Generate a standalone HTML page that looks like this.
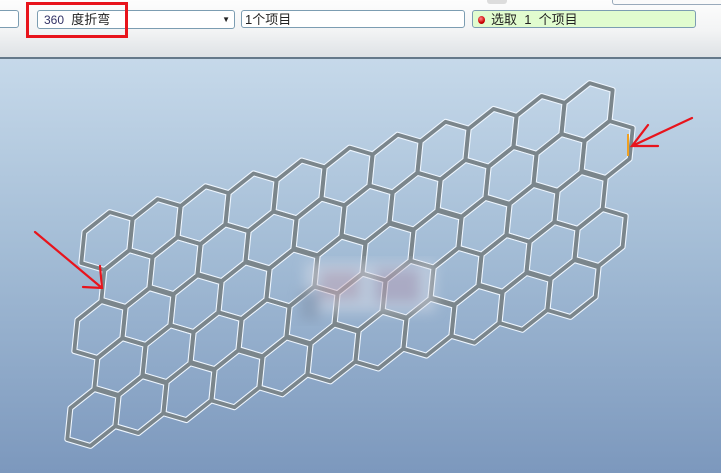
<!DOCTYPE html>
<html><head><meta charset="utf-8"><style>
body{margin:0;width:721px;height:473px;overflow:hidden;position:relative;font-family:"Liberation Sans","Noto Sans CJK SC",sans-serif}
#bar{position:absolute;left:0;top:0;width:721px;height:57px;background:linear-gradient(#fdfdfd 0,#f3f4f5 30px,#dfe3e6 56px);border-bottom:1px solid #b9cad6}
#line{position:absolute;left:0;top:57px;width:721px;height:2px;background:#65798a}
#vp{position:absolute;left:0;top:59px;width:721px;height:414px;background:linear-gradient(#c6d9ea,#a4bdd6 45%,#7c98bd)}
.f{position:absolute;top:10px;height:18px;border:1px solid #7c9db2;border-radius:3px;background:#fff;font-size:13px;line-height:17px;color:#222;box-sizing:border-box;padding-left:4px;white-space:nowrap}
</style></head><body>
<div id="bar"></div>
<div class="f" style="left:-5px;width:24px"></div>
<div class="f" style="left:37px;width:198px;height:19px;padding-left:6px"><span style="color:#336;font-size:12px">360</span>&nbsp; 度折弯<span style="position:absolute;right:4px;top:0;font-size:8px">▼</span></div>
<div class="f" style="left:241px;width:224px;padding-left:3px">1个项目</div>
<div class="f" style="left:472px;width:224px;background:#e1fccf;padding-left:18px">选取 &nbsp;1 &nbsp;个项目<span style="position:absolute;left:5px;top:5px;width:7px;height:8px;border-radius:50%;background:radial-gradient(circle at 40% 35%,#f88,#c00 60%,#800)"></span></div>
<div style="position:absolute;left:26px;top:2px;width:102px;height:36px;border:3px solid #e8141c;box-sizing:border-box"></div>
<div style="position:absolute;left:612px;top:-6px;width:110px;height:9px;border:1px solid #9ab;border-radius:3px;background:#fafafa"></div>
<div style="position:absolute;left:487px;top:-3px;width:20px;height:7px;background:#ddd;border-radius:3px"></div>
<div id="line"></div>
<div id="vp"></div>
<svg id="s" width="721" height="473" style="position:absolute;left:0;top:0">
<defs>
<filter id="bl"><feGaussianBlur stdDeviation="6"/></filter>
</defs>
<g id="hw"></g>
<g id="hg"></g>
<g filter="url(#bl)" opacity="0.5">
<rect x="305" y="262" width="130" height="50" fill="#d8dde8"/>
<rect x="320" y="270" width="40" height="30" fill="#c8a8b8"/>
<rect x="375" y="268" width="45" height="35" fill="#b8a0b8"/>
<rect x="300" y="290" width="20" height="30" fill="#8090a8"/>
</g>
<line x1="628" y1="134" x2="628" y2="156" stroke="#f0a020" stroke-width="2"/>
<g stroke="#e8141c" stroke-width="2.2" fill="none" stroke-linecap="round">
<path d="M35 232 L102 288 M100 266 L102 288 L83 287"/>
<path d="M692 118 L632 146 M648 125 L632 146 L658 146"/>
</g>
</svg>
<script>
var ns="http://www.w3.org/2000/svg";
var V=[[2.5,-27.5],[24.5,-21],[21.5,8.5],[-2.5,27.5],[-24.5,21],[-21.5,-8.5]];
var k=1.05;
var a=[48,-12.9],b1=[20,38],b2=[-27,50],C=[107,241];
var hw=document.getElementById('hw'),hg=document.getElementById('hg');
for(var r=0;r<5;r++){var n1=Math.floor((r+1)/2),n2=Math.floor(r/2);
for(var i=0;i<11;i++){var cx=C[0]+i*a[0]+n1*b1[0]+n2*b2[0],cy=C[1]+i*a[1]+n1*b1[1]+n2*b2[1];
var pts=V.map(function(v){return (cx+k*v[0]).toFixed(1)+','+(cy+k*v[1]).toFixed(1)}).join(' ');
var p=document.createElementNS(ns,'polygon');p.setAttribute('points',pts);p.setAttribute('fill','none');p.setAttribute('stroke','#eef6ff');p.setAttribute('stroke-width','6');p.setAttribute('stroke-linejoin','round');hw.appendChild(p);
var q=document.createElementNS(ns,'polygon');q.setAttribute('points',pts);q.setAttribute('fill','none');q.setAttribute('stroke','#7b868c');q.setAttribute('stroke-width','3.8');q.setAttribute('stroke-linejoin','round');hg.appendChild(q);}}
</script>
</body></html>
